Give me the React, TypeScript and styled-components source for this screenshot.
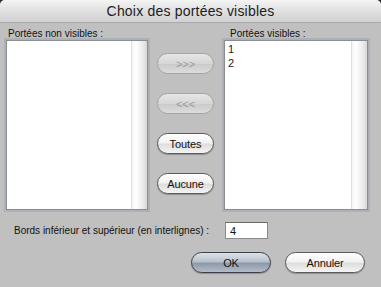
import React from 'react';
import styled, { createGlobalStyle } from 'styled-components';

const GlobalStyle = createGlobalStyle`
  html, body {
    margin: 0;
    padding: 0;
    background: #2a2a2a;
  }
  #root {
    width: 381px;
    height: 287px;
  }
`;

const Window = styled.div`
  width: 381px;
  height: 287px;
  background: #c0c0c0;
  border-radius: 5px 5px 0 0;
  overflow: hidden;
  display: flex;
  flex-direction: column;
  font-family: 'Liberation Sans', Arial, sans-serif;
  color: #111;
`;

const TitleBar = styled.div`
  height: 22px;
  flex: none;
  display: flex;
  align-items: center;
  justify-content: center;
  background: linear-gradient(#f4f4f4, #dcdcdc 60%, #d2d2d2);
  border-bottom: 1px solid #a9a9a9;
  font-size: 14px;
  color: #1c1c1c;
  letter-spacing: 0.2px;
`;

const Body = styled.div`
  flex: 1;
  display: flex;
  flex-direction: column;
  padding: 5px 13px 0 6px;
`;

const TopRow = styled.div`
  display: flex;
  align-items: flex-start;
`;

const Column = styled.div`
  display: flex;
  flex-direction: column;
`;

const Label = styled.div<{ $indent?: number }>`
  font-size: 10px;
  line-height: 12px;
  height: 12px;
  padding-left: ${(p) => p.$indent ?? 0}px;
  letter-spacing: 0;
  white-space: nowrap;
`;

const List = styled.div<{ $width: number }>`
  width: ${(p) => p.$width}px;
  height: 170px;
  box-sizing: border-box;
  border: 1px solid #8a8d92;
  box-shadow: 0 0 0 2px #acb1b8;
  background: #fff;
  display: flex;
`;

const ListItems = styled.div`
  flex: 1;
  padding: 1px 3px;
  font-size: 11px;
  line-height: 14px;
  color: #222;
`;

const Track = styled.div`
  width: 15px;
  flex: none;
  background: linear-gradient(90deg, #f4f4f4, #ffffff 25%, #ececec 70%, #d8d8d8);
  border-left: 1px solid #e0e0e0;
`;

const Buttons = styled.div`
  width: 57px;
  margin: 25px 10px 0 9px;
  display: flex;
  flex-direction: column;
  gap: 19px;
`;

const Pill = styled.button<{ $disabled?: boolean; $default?: boolean; $width?: number }>`
  width: ${(p) => p.$width ?? 57}px;
  height: 21px;
  padding: 0;
  border-radius: 11px;
  font-family: 'Liberation Sans', Arial, sans-serif;
  font-size: 11px;
  letter-spacing: -0.1px;
  cursor: default;
  border: 1px solid ${(p) => (p.$disabled ? '#a4a4a4' : p.$default ? '#3b4048' : '#5a5a5a')};
  color: ${(p) => (p.$disabled ? '#9a9a9a' : '#111')};
  background: ${(p) =>
    p.$disabled
      ? 'linear-gradient(#e6e6e6, #d6d6d6 50%, #cacaca 51%, #dcdcdc)'
      : p.$default
        ? 'linear-gradient(#dfe3e9, #b9c1cc 45%, #8f9aa9 55%, #b3bcc8)'
        : 'linear-gradient(#ffffff, #f2f2f2 45%, #dedede 55%, #f4f4f4)'};
  box-shadow: ${(p) => (p.$disabled ? 'none' : '0 1px 1px rgba(0,0,0,0.25)')};
`;

const BottomRow = styled.div`
  display: flex;
  align-items: center;
  margin-top: 12px;
  padding-left: 8px;
`;

const FieldLabel = styled.span`
  font-size: 10px;
  letter-spacing: 0;
  width: 211px;
  white-space: nowrap;
`;

const NumberBox = styled.input`
  width: 43px;
  height: 17px;
  box-sizing: border-box;
  border: 1px solid #8a8a8a;
  border-top-color: #6a6a6a;
  background: #fff;
  font-family: 'Liberation Sans', Arial, sans-serif;
  font-size: 11px;
  padding: 0 4px;
  color: #111;
  outline: none;
`;

const Actions = styled.div`
  display: flex;
  justify-content: flex-end;
  gap: 14px;
  margin-top: 13px;
  padding-right: 3px;
`;

export default function App() {
  return (
    <Window>
      <GlobalStyle />
      <TitleBar>Choix des portées visibles</TitleBar>
      <Body>
        <TopRow>
          <Column>
            <Label $indent={2}>Portées non visibles :</Label>
            <List $width={142}>
              <ListItems />
              <Track />
            </List>
          </Column>
          <Buttons>
            <Pill $disabled>&gt;&gt;&gt;</Pill>
            <Pill $disabled>&lt;&lt;&lt;</Pill>
            <Pill>Toutes</Pill>
            <Pill>Aucune</Pill>
          </Buttons>
          <Column>
            <Label $indent={6}>Portées visibles :</Label>
            <List $width={144}>
              <ListItems>
                <div>1</div>
                <div>2</div>
              </ListItems>
              <Track />
            </List>
          </Column>
        </TopRow>
        <BottomRow>
          <FieldLabel>Bords inférieur et supérieur (en interlignes) :</FieldLabel>
          <NumberBox defaultValue="4" />
        </BottomRow>
        <Actions>
          <Pill $default $width={80}>OK</Pill>
          <Pill $width={80}>Annuler</Pill>
        </Actions>
      </Body>
    </Window>
  );
}
